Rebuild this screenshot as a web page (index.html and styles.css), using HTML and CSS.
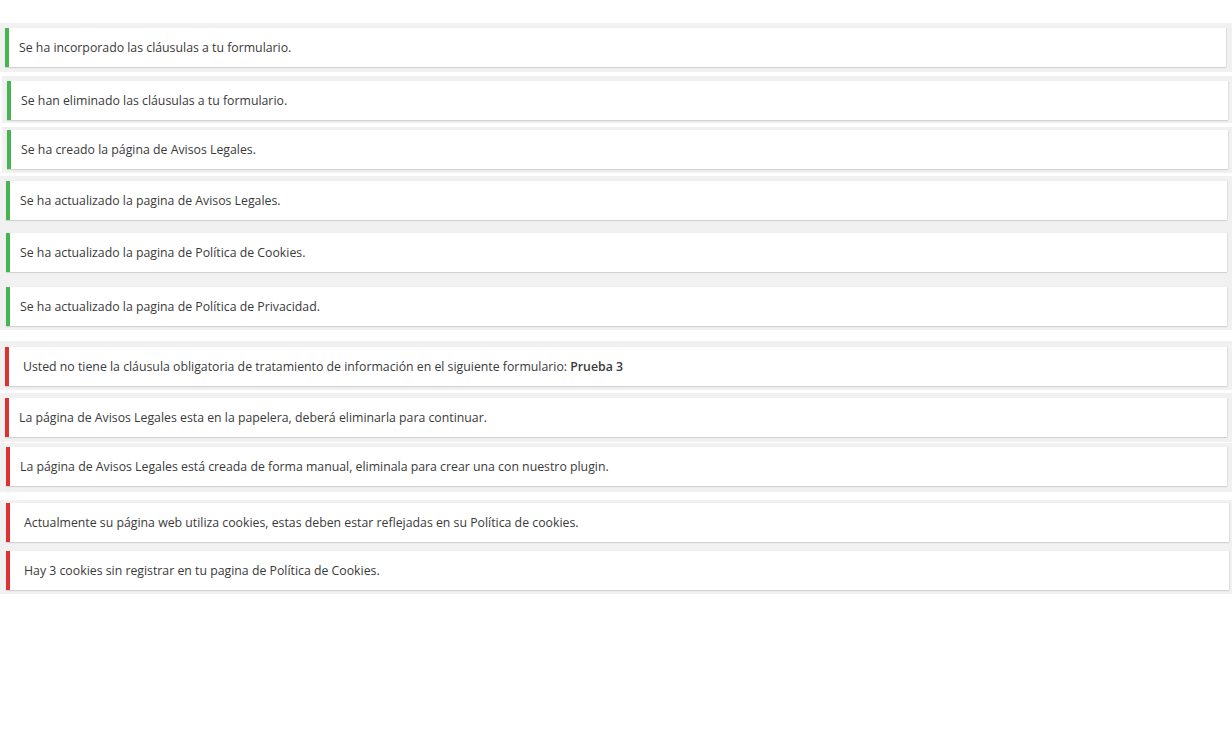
FILE: index.html
```html
<!DOCTYPE html>
<html lang="es">
<head>
<meta charset="utf-8">
<title>Avisos</title>
<link rel="stylesheet" href="styles.css">
</head>
<body>
<div class="page">
  <section class="strip s1">
    <div class="notice ok">Se ha incorporado las cláusulas a tu formulario.</div>
  </section>
  <section class="strip s2">
    <div class="notice ok">Se han eliminado las cláusulas a tu formulario.</div>
  </section>
  <section class="strip s3">
    <div class="notice ok">Se ha creado la página de Avisos Legales.</div>
  </section>
  <section class="strip s4">
    <div class="notice ok">Se ha actualizado la pagina de Avisos Legales.</div>
    <div class="notice ok">Se ha actualizado la pagina de Política de Cookies.</div>
    <div class="notice ok">Se ha actualizado la pagina de Política de Privacidad.</div>
  </section>
  <section class="strip s5">
    <div class="notice err wide">Usted no tiene la cláusula obligatoria de tratamiento de información en el siguiente formulario: <strong>Prueba 3</strong></div>
  </section>
  <section class="strip s6">
    <div class="notice err">La página de Avisos Legales esta en la papelera, deberá eliminarla para continuar.</div>
  </section>
  <section class="strip s7">
    <div class="notice err">La página de Avisos Legales está creada de forma manual, eliminala para crear una con nuestro plugin.</div>
  </section>
  <section class="strip s8">
    <div class="notice err wide">Actualmente su página web utiliza cookies, estas deben estar reflejadas en su Política de cookies.</div>
    <div class="notice err wide">Hay 3 cookies sin registrar en tu pagina de Política de Cookies.</div>
  </section>
</div>
</body>
</html>
```

FILE: styles.css
```css
html, body {
  margin: 0;
  padding: 0;
  background: #ffffff;
}

.page {
  padding-top: 23px;
  width: 1232px;
  font-family: "Open Sans", "Noto Sans", "Liberation Sans", sans-serif;
  font-size: 12.3px;
  color: #3a3a3a;
}

.strip {
  background: #f1f1f1;
  display: flex;
  flex-direction: column;
}

.notice {
  background: #ffffff;
  border-left: 4px solid #46b450;
  box-shadow: 0 1px 1px rgba(0, 0, 0, 0.12), 1px 0 1px rgba(0, 0, 0, 0.05);
  padding: 10px 10px;
  line-height: 19px;
  height: 19px;
  white-space: nowrap;
}

.notice.err {
  border-left-color: #dc3232;
}

.notice.wide {
  padding-left: 14px;
}

.notice strong {
  font-weight: 600;
}

.s1 {
  padding: 5px 6px 5px 5px;
}

.s2 {
  margin: 4px 0 0 2px;
  padding: 5px 4px 3px 5px;
}

.s3 {
  margin: 4px 0 0 2px;
  padding: 3px 4px 4px 5px;
}

.s4 {
  margin-top: 3px;
  padding: 5px 5px 4px 6px;
}

.s4 .notice:nth-child(2) {
  margin-top: 13px;
}

.s4 .notice:nth-child(3) {
  margin-top: 15px;
}

.s5 {
  margin-top: 11px;
  padding: 6px 5px 4px 5px;
}

.s6 {
  margin-top: 3px;
  padding: 5px 5px 5px 5px;
}

.s7 {
  margin-top: 1px;
  padding: 4px 5px 6px 6px;
}

.s8 {
  margin-top: 8px;
  padding: 3px 3px 4px 6px;
}

.s8 .notice + .notice {
  margin-top: 9px;
}
```
